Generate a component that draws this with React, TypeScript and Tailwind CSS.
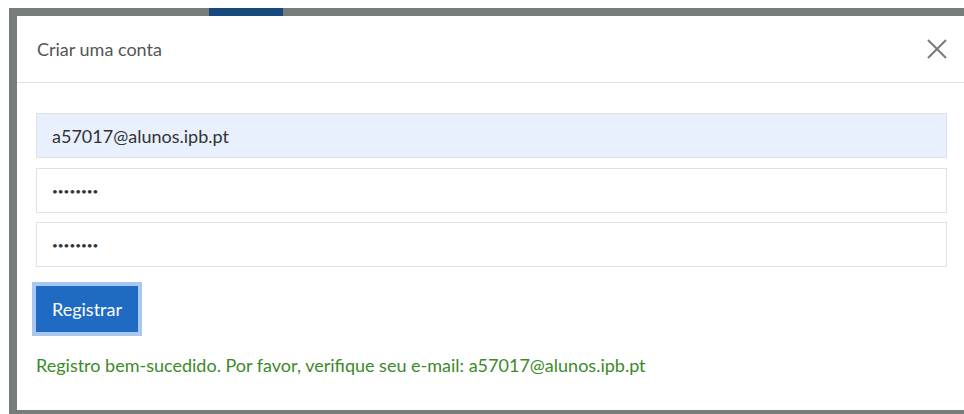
import React, { useState } from 'react';

const font = { fontFamily: 'Lato, "Noto Sans", sans-serif' };

export default function App() {
  const [email, setEmail] = useState('a57017@alunos.ipb.pt');
  const [password, setPassword] = useState('12345678');
  const [confirm, setConfirm] = useState('12345678');
  const [message] = useState('Registro bem-sucedido. Por favor, verifique seu e-mail: a57017@alunos.ipb.pt');

  return (
    <div className="w-[964px] h-[414px] bg-white pt-[8px] pl-[9px] overflow-hidden" style={font}>
      <div className="flex flex-col h-full bg-[#777d7a]">
        {/* backdrop strip behind the modal, with the active nav tab showing through */}
        <div className="flex h-[8px] shrink-0">
          <div className="w-[200px] bg-[#777d7a]" />
          <div className="w-[74px] bg-[#174a7c]" />
          <div className="flex-1 bg-[#777d7a]" />
        </div>

        <div className="flex-1 ml-[8px] mb-[4px] bg-white flex flex-col">
          {/* Cabeçalho */}
          <div className="h-[67px] shrink-0 flex items-center justify-between pl-[20px] pr-[17px] border-b border-[#dee2e6]">
            <h5 className="text-[18px] text-[#555] pt-[1px]">Criar uma conta</h5>
            <button type="button" aria-label="Fechar" className="w-[20px] h-[20px] flex items-center justify-center">
              <svg width="20" height="20" viewBox="0 0 20 20" fill="none" stroke="#7a7a7a" strokeWidth="2">
                <path d="M1 1L19 19M19 1L1 19" />
              </svg>
            </button>
          </div>

          {/* Formulário */}
          <form className="pt-[30px] pl-[19px] pr-[17px] flex flex-col" onSubmit={e => e.preventDefault()}>
            <input
              type="email"
              value={email}
              onChange={e => setEmail(e.target.value)}
              className="h-[45px] px-[15px] text-[18px] text-[#333] bg-[#e8f0fe] border border-[#dee2e6] outline-none"
            />
            <input
              type="password"
              value={password}
              onChange={e => setPassword(e.target.value)}
              className="mt-[10px] h-[45px] px-[15px] text-[10px] text-[#333] bg-white border border-[#dee2e6] outline-none"
            />
            <input
              type="password"
              value={confirm}
              onChange={e => setConfirm(e.target.value)}
              className="mt-[9px] h-[45px] px-[15px] text-[10px] text-[#333] bg-white border border-[#dee2e6] outline-none"
            />
            <div className="mt-[19px]">
              {/* botão com anel de foco */}
              <button
                type="submit"
                className="w-[102px] h-[46px] ring-4 ring-[#a9c8ef] bg-[#1f6bc4] text-white text-[18px]"
              >
                Registrar
              </button>
            </div>
            <p className="mt-[20px] text-[18px] text-[#3b8a2a]">{message}</p>
          </form>
        </div>
      </div>
    </div>
  );
}
